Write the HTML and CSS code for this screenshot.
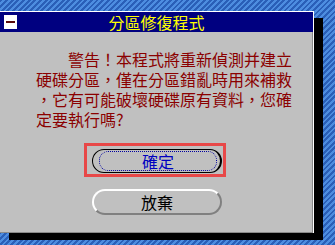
FILE: index.html
```html
<!DOCTYPE html>
<html lang="zh-Hant">
<head>
<meta charset="utf-8">
<link rel="stylesheet" href="styles.css">
</head>
<body>
<div class="window">
  <div class="titlebar">
    <div class="sysmenu"><span class="sysbar"></span></div>
    <div class="title">分區修復程式</div>
    <div></div>
  </div>
  <div class="content">
    <p class="msg">警告！本程式將重新偵測并建立<br>硬碟分區，僅在分區錯亂時用來補救<br>，它有可能破壞硬碟原有資料，您確<br>定要執行嗎?</p>
    <div class="buttons">
      <div class="focus">
        <div class="btn btn-default"><span class="btn-inner">確定</span></div>
      </div>
      <div class="btn btn-normal">放棄</div>
    </div>
  </div>
</div>
</body>
</html>
```

FILE: styles.css
```css
html, body {
  margin: 0;
  padding: 0;
}
body {
  width: 335px;
  height: 245px;
  overflow: hidden;
  background: repeating-linear-gradient(135deg, #2a5fb8 0 2px, #4d8de0 2px 4px);
  font-family: "Noto Sans CJK TC", "Noto Sans CJK SC", sans-serif;
}
.window {
  box-sizing: border-box;
  width: 314px;
  height: 222px;
  margin-top: 11px;
  background: #c0c0c0;
  border-top: 1px solid #ffffff;
  border-right: 1px solid #ffffff;
  box-shadow: 9px 7px 0 #000000;
  display: flex;
  flex-direction: column;
}
.titlebar {
  height: 20px;
  background: #000080;
  display: grid;
  grid-template-columns: 1fr auto 1fr;
  align-items: center;
}
.sysmenu {
  width: 13px;
  height: 14px;
  margin-left: 4px;
  background: #ffffff;
  display: flex;
  align-items: center;
  justify-content: center;
}
.sysbar {
  display: block;
  width: 9px;
  height: 2px;
  background: #5a0a0a;
}
.title {
  color: #ffff00;
  font-size: 16px;
  line-height: 20px;
}
.content {
  flex: 1;
  padding: 17px 0 0 36px;
  box-shadow: inset -1px -1px 0 #8a8a8a;
}
.msg {
  margin: 0;
  text-indent: 32px;
  white-space: nowrap;
  font-size: 16px;
  line-height: 20px;
  color: #8b0000;
}
.buttons {
  display: flex;
  flex-direction: column;
  align-items: flex-start;
  margin-left: 48px;
  margin-top: 14px;
}
.focus {
  border: 3px solid #e84848;
  padding: 3px 1px 1px 5px;
}
.btn {
  box-sizing: border-box;
  width: 130px;
  display: flex;
  align-items: center;
  justify-content: center;
  font-size: 16px;
}
.btn-default {
  height: 24px;
  border: 1px solid #000000;
  border-right-width: 2px;
  border-radius: 12px;
  padding: 1px 3px 1px 6px;
}
.btn-inner {
  flex: 1;
  height: 100%;
  box-sizing: border-box;
  border: 1px dotted #0000a0;
  border-radius: 9px;
  display: flex;
  align-items: center;
  justify-content: center;
  color: #0000c0;
  line-height: 18px;
}
.btn-normal {
  height: 26px;
  margin-top: 12px;
  margin-left: 8px;
  border: 2px solid;
  border-color: #ffffff #808080 #808080 #ffffff;
  border-radius: 13px;
  color: #000000;
  line-height: 20px;
}
```
